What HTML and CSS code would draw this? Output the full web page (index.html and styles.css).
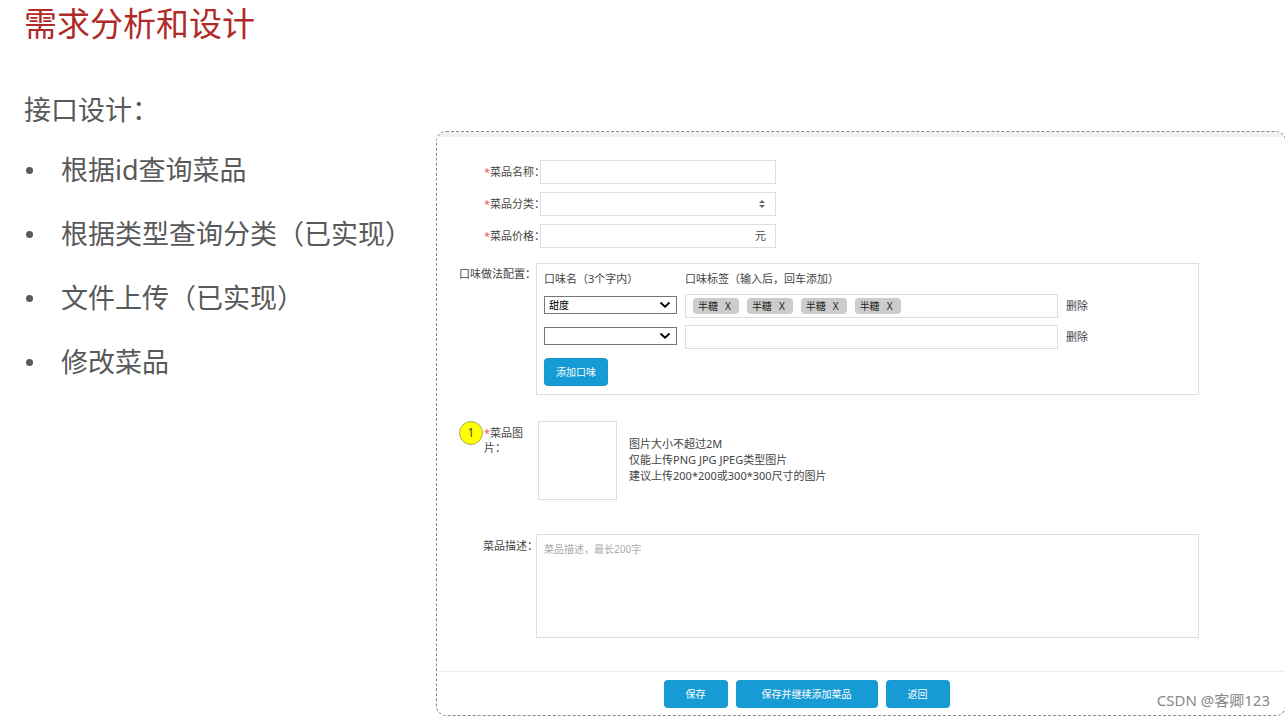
FILE: index.html
```html
<!DOCTYPE html>
<html lang="zh-CN">
<head>
<meta charset="utf-8">
<title>需求分析和设计</title>
<link rel="stylesheet" href="styles.css">
</head>
<body>
<h1 class="title">需求分析和设计</h1>
<main class="slide">
  <section class="outline">
    <h2 class="subtitle">接口设计：</h2>
    <ul class="points">
      <li>根据id查询菜品</li>
      <li>根据类型查询分类（已实现）</li>
      <li>文件上传（已实现）</li>
      <li>修改菜品</li>
    </ul>
  </section>

  <form class="panel">
    <div class="basics">
      <div class="row">
        <label class="label" for="name"><span class="req">*</span>菜品名称：</label>
        <input class="box field" id="name" type="text">
      </div>
      <div class="row">
        <label class="label" for="category"><span class="req">*</span>菜品分类：</label>
        <div class="field stack">
          <select class="box" id="category"><option></option></select>
          <svg class="sorter" width="8" height="10" viewBox="0 0 8 10"><path d="M4 1 7 4H1ZM4 9 1 6H7Z" fill="#666"/></svg>
        </div>
      </div>
      <div class="row">
        <label class="label" for="price"><span class="req">*</span>菜品价格：</label>
        <div class="field stack">
          <input class="box" id="price" type="text">
          <span class="unit">元</span>
        </div>
      </div>
    </div>

    <div class="section">
      <span class="label label-flavor">口味做法配置：</span>
      <div class="box flavors">
        <div class="flavor-row flavor-head">
          <span>口味名（3个字内）</span>
          <span>口味标签（输入后，回车添加）</span>
        </div>
        <div class="flavor-row">
          <div class="stack picker">
            <select aria-label="口味名"><option>甜度</option></select>
            <svg class="chevron" width="12" height="8" viewBox="0 0 12 8"><path d="M1.5 1.5 6 5.7 10.5 1.5" fill="none" stroke="#000" stroke-width="1.8"/></svg>
          </div>
          <div class="box tags">
            <span class="tag">半糖 <button type="button" aria-label="移除">X</button></span>
            <span class="tag">半糖 <button type="button" aria-label="移除">X</button></span>
            <span class="tag">半糖 <button type="button" aria-label="移除">X</button></span>
            <span class="tag">半糖 <button type="button" aria-label="移除">X</button></span>
          </div>
          <button type="button" class="remove">删除</button>
        </div>
        <div class="flavor-row">
          <div class="stack picker">
            <select aria-label="口味名"><option></option></select>
            <svg class="chevron" width="12" height="8" viewBox="0 0 12 8"><path d="M1.5 1.5 6 5.7 10.5 1.5" fill="none" stroke="#000" stroke-width="1.8"/></svg>
          </div>
          <input class="box" type="text" aria-label="口味标签">
          <button type="button" class="remove">删除</button>
        </div>
        <button type="button" class="primary add">添加口味</button>
      </div>
    </div>

    <div class="section picture">
      <div class="label label-picture">
        <span class="marker">1</span>
        <label for="photo"><span class="req">*</span>菜品图片：</label>
      </div>
      <button type="button" class="box upload" id="photo" aria-label="上传图片"></button>
      <p class="hint">图片大小不超过2M<br>仅能上传PNG JPG JPEG类型图片<br>建议上传200*200或300*300尺寸的图片</p>
    </div>

    <div class="section describe">
      <label class="label label-describe" for="description">菜品描述：</label>
      <textarea class="box" id="description" placeholder="菜品描述，最长200字"></textarea>
    </div>

    <footer class="actions">
      <button type="button" class="primary">保存</button>
      <button type="button" class="primary wide">保存并继续添加菜品</button>
      <button type="button" class="primary">返回</button>
    </footer>
  </form>
</main>
<div class="watermark">CSDN @客卿123</div>
</body>
</html>
```
FILE: styles.css
```css
* { box-sizing: border-box; }

body {
  position: relative;
  margin: 0;
  background: #fff;
  overflow: hidden;
  font-family: "Noto Sans", "Noto Sans CJK SC", sans-serif;
  font-size: 11px;
  line-height: 16px;
  color: #444;
}

button, input, select, textarea {
  margin: 0;
  font: inherit;
  color: inherit;
}

.title {
  margin: 0;
  padding-left: 24px;
  font-size: 33px;
  font-weight: 400;
  line-height: 48px;
  color: #b02a27;
}

.slide { display: flex; }

.outline {
  flex: 0 0 436px;
  padding: 40px 0 0 24px;
  font-size: 27px;
  line-height: 44px;
  color: #595959;
}

.subtitle {
  margin: 0;
  font-size: 27px;
  font-weight: 400;
}

.points {
  display: grid;
  gap: 20px;
  margin: 16px 0 0;
  padding: 0;
  list-style: none;
}

.points li {
  display: flex;
  align-items: center;
  white-space: nowrap;
}

.points li::before {
  content: "";
  width: 7px;
  height: 7px;
  margin: 0 28px 0 2px;
  border-radius: 50%;
  background: #595959;
}

.panel {
  flex: 1;
  min-width: 0;
  margin: 83px -1px 0 0;
  border: 1px dashed #888;
  border-radius: 10px;
  overflow: hidden;
}

.panel::before {
  content: "";
  display: block;
  height: 5px;
  background: #f2f2f2;
}

.box {
  border: 1px solid #ddd;
  border-radius: 0;
  background: transparent;
}

.basics {
  display: grid;
  gap: 8px;
  padding-top: 23px;
}

.row { display: flex; align-items: center; }

.label {
  flex: none;
  width: 103px;
  padding-left: 47px;
  white-space: nowrap;
}

.req { color: #f55; }

.field { width: 236px; }
.row .box { height: 24px; }

.stack { display: grid; align-items: center; }
.stack > * { grid-area: 1 / 1; }
.stack > svg, .unit { justify-self: end; pointer-events: none; }
.sorter { margin-right: 10px; }
.unit { margin-right: 10px; }

select { appearance: none; width: 100%; }

.section {
  display: flex;
  align-items: flex-start;
  margin: 15px 86px 0 0;
}

.label-flavor {
  width: 99px;
  padding: 3px 0 0 22px;
}

.flavors {
  flex: 1;
  display: grid;
  gap: 7px;
  padding: 7px 7px 8px;
}

.flavor-row {
  display: grid;
  grid-template-columns: 133px 373px auto;
  justify-content: start;
  align-items: center;
  gap: 8px;
}

.flavor-row > .box { height: 24px; }

.picker { align-self: start; padding-top: 2px; }

.picker select {
  height: 18px;
  padding: 0 4px;
  border: 1px solid #767676;
  border-radius: 0;
  background: transparent;
  font-size: 10px;
  line-height: 16px;
  color: #000;
}

.chevron { margin-right: 6px; }

.tags {
  display: flex;
  align-items: center;
  gap: 8px;
  padding-left: 7px;
}

.tag {
  display: flex;
  gap: 7px;
  padding: 0 8px 0 5px;
  border-radius: 4px;
  background: #ccc;
  font-size: 10px;
  color: #222;
}

.tag button, .remove {
  padding: 0;
  border: 0;
  background: none;
}

.primary {
  min-width: 64px;
  height: 28px;
  padding: 0;
  border: 0;
  border-radius: 4px;
  background: #169bd5;
  font-size: 10px;
  color: #fff;
}

.wide { width: 142px; }
.add { justify-self: start; margin-top: 2px; }

.picture { margin-top: 26px; }

.label-picture {
  display: flex;
  gap: 1px;
  width: 101px;
  padding-left: 22px;
  line-height: 15px;
  white-space: normal;
}

.label-picture label { width: 44px; padding-top: 4px; }

.marker {
  flex: none;
  width: 24px;
  height: 24px;
  border: 1px solid #aaa86a;
  border-radius: 50%;
  background: #ff0;
  font-size: 12px;
  line-height: 22px;
  text-align: center;
}

.upload { width: 79px; height: 79px; }

.hint { margin: 15px 0 0 12px; }

.describe { margin-top: 34px; }
.label-describe { width: 99px; padding: 4px 0 0 46px; }

textarea {
  display: block;
  flex: 1;
  height: 104px;
  padding: 6px 7px;
  resize: none;
}

textarea::placeholder { font-size: 10px; color: #aaa; }

.actions {
  display: flex;
  justify-content: center;
  gap: 8px;
  margin-top: 33px;
  padding: 8px 109px 7px 0;
  border-top: 1px solid #eee;
}

.watermark {
  position: absolute;
  right: 15px;
  bottom: 6px;
  font-size: 15px;
  line-height: 20px;
  color: #888;
}
```
